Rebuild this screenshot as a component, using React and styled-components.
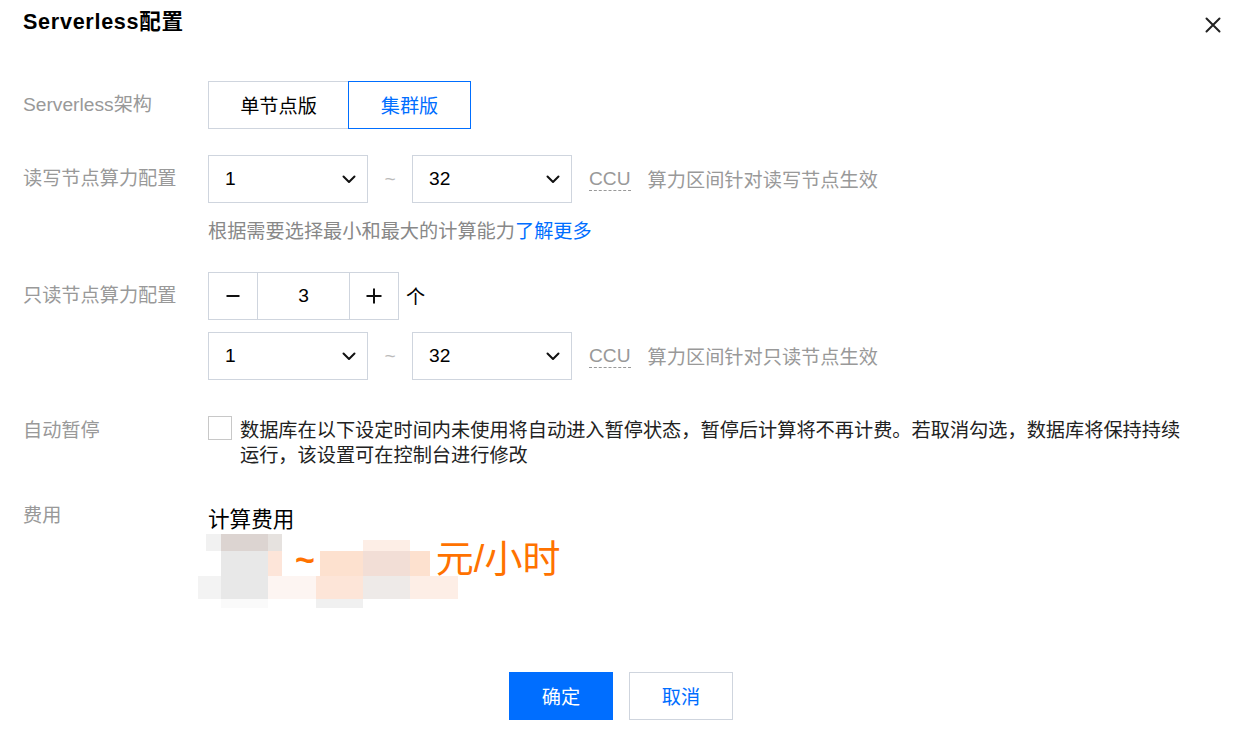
import React from 'react';
import styled, { createGlobalStyle } from 'styled-components';

const GlobalStyle = createGlobalStyle`
  html, body { margin: 0; padding: 0; background: #fff; }
  body { font-family: "Liberation Sans", "Noto Sans CJK SC", sans-serif; color: #000; }
  * { box-sizing: border-box; }
`;

const FONT = 19.2;

const Dialog = styled.div`
  width: 1242px;
  height: 730px;
  background: #fff;
  overflow: hidden;
  display: flex;
  flex-direction: column;
`;

const Header = styled.div`
  display: flex;
  align-items: flex-start;
  justify-content: space-between;
  padding: 7px 19px 0 23px;
  height: 37px;
`;

const Title = styled.h1`
  margin: 0;
  font-size: 21.6px;
  line-height: 30px;
  font-weight: 700;
  letter-spacing: 0.7px;
  color: #000;
`;

const CloseButton = styled.button`
  width: 20px;
  height: 20px;
  margin-top: 8px;
  padding: 0;
  border: none;
  background: transparent;
  display: flex;
  align-items: center;
  justify-content: center;
  cursor: pointer;
`;

const Body = styled.div`
  padding: 44px 50px 0 23px;
  display: flex;
  flex-direction: column;
`;

const Row = styled.div`
  display: grid;
  grid-template-columns: 185px 1fr;
  margin-top: ${p => p.$gap || 0}px;
`;

const Label = styled.div`
  font-size: ${FONT}px;
  line-height: ${p => p.$lh || 48}px;
  color: #999;
  white-space: nowrap;
`;

const Control = styled.div`
  display: flex;
  flex-direction: column;
  align-items: flex-start;
`;

const Line = styled.div`
  display: flex;
  align-items: center;
  margin-top: ${p => p.$gap || 0}px;
`;

const Segment = styled.div`
  display: flex;
`;

const SegButton = styled.button`
  height: 48px;
  width: ${p => p.$w}px;
  margin-left: ${p => (p.$first ? 0 : -1)}px;
  position: relative;
  z-index: ${p => (p.$active ? 1 : 0)};
  border: 1px solid ${p => (p.$active ? '#006eff' : '#cfd5de')};
  background: #fff;
  color: ${p => (p.$active ? '#006eff' : '#000')};
  font-family: inherit;
  font-size: ${FONT}px;
  padding: 0;
  cursor: pointer;
`;

const SelectBox = styled.div`
  width: 160px;
  height: 48px;
  border: 1px solid #cfd5de;
  display: flex;
  align-items: center;
  justify-content: space-between;
  padding: 0 11px 0 16px;
  font-size: ${FONT}px;
  color: #000;
`;

const RangeSep = styled.span`
  width: 44px;
  text-align: center;
  color: #bbb;
  font-size: ${FONT}px;
`;

const Unit = styled.span`
  margin-left: 17px;
  font-size: ${FONT}px;
  line-height: 22px;
  color: #999;
  border-bottom: 1px dashed #999;
`;

const Hint = styled.span`
  margin-left: 17px;
  font-size: ${FONT}px;
  color: #999;
`;

const Help = styled.div`
  margin-top: 17px;
  font-size: ${FONT}px;
  line-height: 24px;
  color: #888;
`;

const Link = styled.a`
  color: #006eff;
  text-decoration: none;
`;

const Stepper = styled.div`
  display: grid;
  grid-template-columns: 48px 1fr 48px;
  width: 191px;
  height: 48px;
  border: 1px solid #cfd5de;
`;

const StepCell = styled.div`
  display: flex;
  align-items: center;
  justify-content: center;
  font-size: ${FONT}px;
  color: #000;
  border-left: ${p => (p.$mid ? '1px solid #cfd5de' : 'none')};
  border-right: ${p => (p.$mid ? '1px solid #cfd5de' : 'none')};
`;

const Suffix = styled.span`
  margin-left: 7px;
  font-size: ${FONT}px;
  color: #000;
`;

const CheckLine = styled.div`
  display: flex;
  align-items: flex-start;
  gap: 8px;
`;

const CheckBox = styled.span`
  flex: none;
  width: 24px;
  height: 24px;
  margin-top: -2px;
  border: 1px solid #c8c8c8;
  background: #fff;
`;

const CheckText = styled.div`
  font-size: ${FONT}px;
  line-height: 25px;
  color: #222;
`;

const CostTitle = styled.div`
  font-size: 21.6px;
  line-height: 32px;
  color: #000;
`;

const PriceArea = styled.div`
  position: relative;
  margin-top: -6px;
  height: 80px;
  width: 400px;
`;

const Mosaic = styled.svg`
  position: absolute;
  left: -20px;
  top: 0;
  z-index: 0;
`;

const PriceLine = styled.div`
  position: relative;
  z-index: 1;
  display: flex;
  align-items: center;
  padding-top: 4px;
  height: 54px;
  font-size: 38px;
  line-height: 50px;
  color: #ff7200;
`;

const Tilde = styled.span`
  font-size: 34px;
  font-weight: 700;
`;

const Masked = styled.span`
  display: inline-block;
  width: ${p => p.$w}px;
`;

const Footer = styled.div`
  display: flex;
  justify-content: center;
  gap: 16px;
  margin-top: 62px;
`;

const Button = styled.button`
  width: 104px;
  height: 48px;
  font-family: inherit;
  font-size: ${FONT}px;
  border: 1px solid ${p => (p.$primary ? '#006eff' : '#cfd5de')};
  background: ${p => (p.$primary ? '#006eff' : '#fff')};
  color: ${p => (p.$primary ? '#fff' : '#006eff')};
  cursor: pointer;
  padding: 0;
`;

const Chevron = () => (
  <svg width="14" height="9" viewBox="0 0 14 9" fill="none">
    <polyline points="1.5,1.5 7,7 12.5,1.5" stroke="#111" strokeWidth="2" strokeLinecap="round" strokeLinejoin="round" />
  </svg>
);

const Select = ({ value }) => (
  <SelectBox>
    <span>{value}</span>
    <Chevron />
  </SelectBox>
);

const Range = ({ hint }) => (
  <Line>
    <Select value="1" />
    <RangeSep>~</RangeSep>
    <Select value="32" />
    <Unit>CCU</Unit>
    <Hint>{hint}</Hint>
  </Line>
);

const mosaicRects = [
  // x, y, w, h (relative to x=188, y=530), color
  [18, 4, 15, 17, '#f1f1f1'],
  [33, 4, 47, 17, '#dcd4d1'],
  [80, 4, 14, 17, '#e6e2df'],
  [175, 10, 47, 11, '#fdeee6'],
  [33, 21, 47, 25, '#e8e8e8'],
  [80, 21, 14, 25, '#fde5d9'],
  [132, 21, 43, 25, '#fde1cf'],
  [175, 21, 47, 25, '#f2ded6'],
  [222, 21, 20, 25, '#fde1cf'],
  [10, 46, 23, 23, '#f3f3f3'],
  [33, 46, 47, 23, '#e8e8e8'],
  [80, 46, 48, 23, '#fdf5f2'],
  [128, 46, 47, 23, '#fde5d8'],
  [175, 46, 47, 23, '#eeeae8'],
  [222, 46, 48, 23, '#fdeee6'],
  [33, 69, 47, 9, '#fafafa'],
  [128, 69, 47, 9, '#f0f0f0'],
];

export default function App() {
  return (
    <>
      <GlobalStyle />
      <Dialog>
        <Header>
          <Title>Serverless配置</Title>
          <CloseButton aria-label="关闭">
            <svg width="16" height="16" viewBox="0 0 16 16">
              <path d="M1.5 1.5 L14.5 14.5 M14.5 1.5 L1.5 14.5" stroke="#222" strokeWidth="2" strokeLinecap="round" />
            </svg>
          </CloseButton>
        </Header>
        <Body>
          <Row>
            <Label>Serverless架构</Label>
            <Control>
              <Segment>
                <SegButton $first $w={141}>单节点版</SegButton>
                <SegButton $active $w={123}>集群版</SegButton>
              </Segment>
            </Control>
          </Row>
          <Row $gap={26}>
            <Label>读写节点算力配置</Label>
            <Control>
              <Range hint="算力区间针对读写节点生效" />
              <Help>
                根据需要选择最小和最大的计算能力<Link href="#">了解更多</Link>
              </Help>
            </Control>
          </Row>
          <Row $gap={28}>
            <Label>只读节点算力配置</Label>
            <Control>
              <Line>
                <Stepper>
                  <StepCell>
                    <svg width="14" height="14" viewBox="0 0 14 14">
                      <path d="M0.5 7 H13.5" stroke="#111" strokeWidth="2" />
                    </svg>
                  </StepCell>
                  <StepCell $mid>3</StepCell>
                  <StepCell>
                    <svg width="16" height="16" viewBox="0 0 16 16">
                      <path d="M0.5 8 H15.5 M8 0.5 V15.5" stroke="#111" strokeWidth="2" />
                    </svg>
                  </StepCell>
                </Stepper>
                <Suffix>个</Suffix>
              </Line>
              <Line $gap={12}>
                <Select value="1" />
                <RangeSep>~</RangeSep>
                <Select value="32" />
                <Unit>CCU</Unit>
                <Hint>算力区间针对只读节点生效</Hint>
              </Line>
            </Control>
          </Row>
          <Row $gap={38}>
            <Label $lh={25}>自动暂停</Label>
            <Control>
              <CheckLine>
                <CheckBox />
                <CheckText>
                  数据库在以下设定时间内未使用将自动进入暂停状态，暂停后计算将不再计费。若取消勾选，数据库将保持持续运行，该设置可在控制台进行修改
                </CheckText>
              </CheckLine>
            </Control>
          </Row>
          <Row $gap={36}>
            <Label $lh={24}>费用</Label>
            <Control>
              <CostTitle>计算费用</CostTitle>
              <PriceArea>
                <Mosaic width="290" height="80" viewBox="0 0 290 80">
                  {mosaicRects.map(([x, y, w, h, c], i) => (
                    <rect key={i} x={x} y={y} width={w} height={h} fill={c} />
                  ))}
                </Mosaic>
                <PriceLine>
                  <Masked $w={87} />
                  <Tilde>~</Tilde>
                  <Masked $w={121} />
                  <span>元/小时</span>
                </PriceLine>
              </PriceArea>
            </Control>
          </Row>
        </Body>
        <Footer>
          <Button $primary>确定</Button>
          <Button>取消</Button>
        </Footer>
      </Dialog>
    </>
  );
}
